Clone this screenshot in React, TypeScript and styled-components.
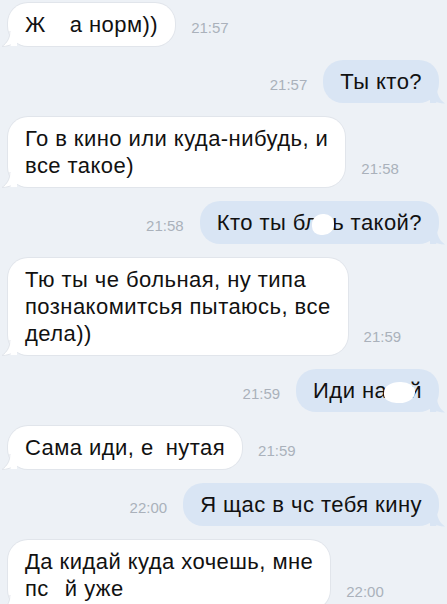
import React from "react";
import styled, { createGlobalStyle } from "styled-components";

const GlobalStyle = createGlobalStyle`
  html, body {
    margin: 0;
    padding: 0;
    background: #edf1f6;
  }
  body {
    font-family: "Liberation Sans", Arial, sans-serif;
    -webkit-font-smoothing: antialiased;
  }
`;

type Side = "in" | "out";

const Thread = styled.div`
  display: flex;
  flex-direction: column;
  gap: 14px;
  padding: 3px 8px 0 8px;
  height: 604px;
  overflow: hidden;
  box-sizing: border-box;
  background: #edf1f6;
`;

const Row = styled.div<{ $side: Side }>`
  display: flex;
  align-items: flex-end;
  justify-content: ${(p) => (p.$side === "out" ? "flex-end" : "flex-start")};
  gap: 16px;
`;

const Bubble = styled.div<{ $side: Side }>`
  position: relative;
  padding: 8px 17px 8px 17px;
  border-radius: 20px;
  font-size: 22px;
  letter-spacing: 0.45px;
  line-height: 27px;
  color: #111;
  background: ${(p) => (p.$side === "out" ? "#d9e5f4" : "#ffffff")};
  box-shadow: ${(p) =>
    p.$side === "out" ? "none" : "0 0 0 1px #e1e5eb"};
  white-space: nowrap;
`;

const Tail = styled.svg<{ $side: Side }>`
  position: absolute;
  bottom: -1px;
  width: 16px;
  height: 16px;
  ${(p) =>
    p.$side === "out"
      ? "right: -7px; transform: scaleX(-1);"
      : "left: -7px;"}
`;

const Time = styled.span`
  font-size: 15px;
  line-height: 18px;
  color: #aab1bb;
  margin-bottom: 9px;
  flex-shrink: 0;
`;

const Blot = styled.span<{ $w: number; $left?: number; $right?: number }>`
  position: relative;
  display: inline-block;
  vertical-align: -4px;
  width: ${(p) => p.$w}px;
  height: 16px;
  &::after {
    content: "";
    position: absolute;
    top: -4px;
    bottom: -1px;
    left: ${(p) => -(p.$left ?? 0)}px;
    right: ${(p) => -(p.$right ?? 0)}px;
    background: #ffffff;
    border-radius: 50% 45% 50% 40%;
  }
`;

function BubbleTail({ side }: { side: Side }) {
  const fill = side === "out" ? "#d9e5f4" : "#ffffff";
  return (
    <Tail $side={side} viewBox="0 0 16 16">
      <path
        d="M9 0 C9 7 6 12 1 15.5 C6 15.5 11 14 14 11 L14 0 Z"
        fill={fill}
        stroke={side === "out" ? "none" : "#e1e5eb"}
        strokeWidth="1"
      />
      <rect x="9.6" y="0" width="6.4" height="15" fill={fill} />
    </Tail>
  );
}

function Message({
  side,
  time,
  children,
}: {
  side: Side;
  time: string;
  children: React.ReactNode;
}) {
  const bubble = (
    <Bubble $side={side}>
      <BubbleTail side={side} />
      <span style={{ position: "relative" }}>{children}</span>
    </Bubble>
  );
  return (
    <Row $side={side}>
      {side === "out" && <Time>{time}</Time>}
      {bubble}
      {side === "in" && <Time>{time}</Time>}
    </Row>
  );
}

export default function App() {
  return (
    <>
      <GlobalStyle />
      <Thread>
        <Message side="in" time="21:57">
          Ж<Blot $w={24} />а норм))
        </Message>
        <Message side="out" time="21:57">
          Ты кто?
        </Message>
        <Message side="in" time="21:58">
          Го в кино или куда-нибудь, и
          <br />
          все такое)
        </Message>
        <Message side="out" time="21:58">
          Кто ты бл<Blot $w={14} $left={6} $right={2} />ь такой?
        </Message>
        <Message side="in" time="21:59">
          Тю ты че больная, ну типа
          <br />
          познакомитсья пытаюсь, все
          <br />
          дела))
        </Message>
        <Message side="out" time="21:59">
          Иди на<Blot $w={22} $left={3} $right={6} />й
        </Message>
        <Message side="in" time="21:59">
          Сама иди, е<Blot $w={12} />нутая
        </Message>
        <Message side="out" time="22:00">
          Я щас в чс тебя кину
        </Message>
        <Message side="in" time="22:00">
          Да кидай куда хочешь, мне
          <br />
          пс<Blot $w={16} />й уже
        </Message>
      </Thread>
    </>
  );
}
